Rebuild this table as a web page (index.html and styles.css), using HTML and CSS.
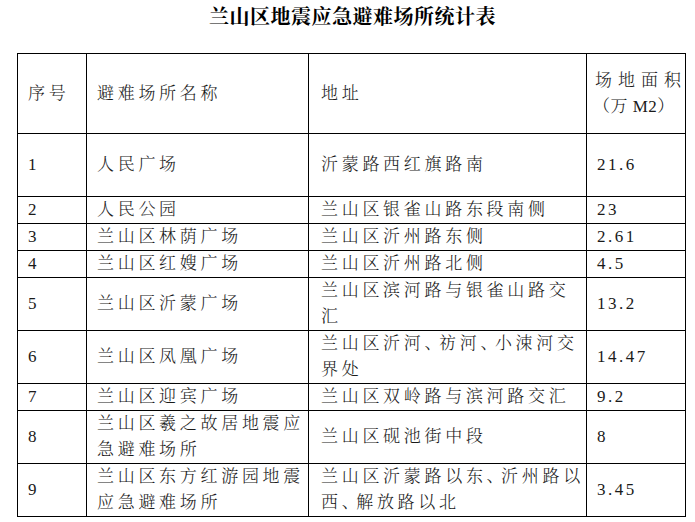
FILE: index.html
```html
<!DOCTYPE html>
<html lang="zh-CN">
<head>
<meta charset="utf-8">
<title>兰山区地震应急避难场所统计表</title>
<link rel="stylesheet" href="styles.css">
</head>
<body>
<h1 class="title">兰山区地震应急避难场所统计表</h1>
<table class="sheet">
  <colgroup>
    <col class="c-no"><col class="c-name"><col class="c-addr"><col class="c-area">
  </colgroup>
  <tr class="row-head">
    <td>序号</td>
    <td>避难场所名称</td>
    <td class="addr">地址</td>
    <td class="head-area"><span class="head-l1">场地面积</span><br><span class="head-l2">（万 M2）</span></td>
  </tr>
  <tr class="row-tall">
    <td class="num">1</td><td>人民广场</td><td class="addr">沂蒙路西红旗路南</td><td class="num">21.6</td>
  </tr>
  <tr>
    <td class="num">2</td><td>人民公园</td><td class="addr">兰山区银雀山路东段南侧</td><td class="num">23</td>
  </tr>
  <tr>
    <td class="num">3</td><td>兰山区林荫广场</td><td class="addr">兰山区沂州路东侧</td><td class="num">2.61</td>
  </tr>
  <tr>
    <td class="num">4</td><td>兰山区红嫂广场</td><td class="addr">兰山区沂州路北侧</td><td class="num">4.5</td>
  </tr>
  <tr>
    <td class="num">5</td><td>兰山区沂蒙广场</td><td class="addr">兰山区滨河路与银雀山路交<br>汇</td><td class="num">13.2</td>
  </tr>
  <tr>
    <td class="num">6</td><td>兰山区凤凰广场</td><td class="addr">兰山区沂河<span class="pn">、</span>祊河<span class="pn">、</span>小涑河交<br>界处</td><td class="num">14.47</td>
  </tr>
  <tr>
    <td class="num">7</td><td>兰山区迎宾广场</td><td class="addr">兰山区双岭路与滨河路交汇</td><td class="num">9.2</td>
  </tr>
  <tr>
    <td class="num">8</td><td>兰山区羲之故居地震应<br>急避难场所</td><td class="addr">兰山区砚池街中段</td><td class="num">8</td>
  </tr>
  <tr>
    <td class="num">9</td><td>兰山区东方红游园地震<br>应急避难场所</td><td class="addr">兰山区沂蒙路以东<span class="pn">、</span>沂州路以<br>西<span class="pn">、</span>解放路以北</td><td class="num">3.45</td>
  </tr>
</table>
</body>
</html>
```

FILE: styles.css
```css
html, body {
  margin: 0;
  padding: 0;
  background: #ffffff;
}

body {
  font-family: "Liberation Serif", "Noto Serif CJK SC", "Noto Sans CJK SC", serif;
  color: #1a1a1a;
}

.title {
  margin: 0;
  padding: 5px 0 0 10px;
  height: 53px;
  box-sizing: border-box;
  text-align: center;
  font-size: 20px;
  line-height: 24px;
  font-weight: 700;
  letter-spacing: 0.5px;
  color: #000;
}

.sheet {
  margin-left: 17px;
  border-collapse: collapse;
  table-layout: fixed;
  width: 668px;
}

.c-no { width: 69px; }
.c-name { width: 222px; }
.c-addr { width: 278px; }
.c-area { width: 99px; }

.sheet td {
  border: 1px solid #000;
  padding: 0 0 0 10px;
  font-size: 17px;
  line-height: 26px;
  letter-spacing: 3.7px;
  font-weight: 300;
  vertical-align: middle;
  white-space: nowrap;
  overflow: hidden;
}

.sheet td.addr {
  padding-left: 12px;
}

.sheet td.num {
  letter-spacing: 2.5px;
}

.pn {
  letter-spacing: -6.5px;
  margin-right: 4px;
}

.sheet td.head-area {
  padding-left: 8px;
}

.head-l1 {
  letter-spacing: 6px;
}

.head-l2 {
  letter-spacing: 0.5px;
  margin-left: -2px;
}

.row-head {
  height: 80px;
}

.row-tall {
  height: 63px;
}
```
